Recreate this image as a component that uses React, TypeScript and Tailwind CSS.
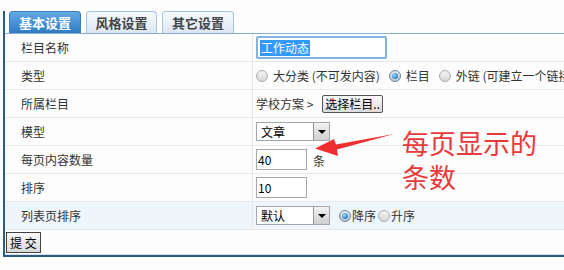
import React from 'react';

const font = { fontFamily: '"Noto Sans CJK SC", "Liberation Sans", sans-serif' };

function Radio({ checked }: { checked?: boolean }) {
  return (
    <span
      className={
        'inline-flex items-center justify-center w-[12px] h-[12px] rounded-full border ' +
        (checked
          ? 'border-[#6b7f92] bg-gradient-to-b from-[#e8eef4] to-[#b9c7d4]'
          : 'border-[#a8adb3] bg-gradient-to-b from-[#f4f4f4] to-[#d6d6d6]')
      }
    >
      {checked && <span className="w-[6px] h-[6px] rounded-full bg-[radial-gradient(circle_at_35%_35%,#9fd4ff,#0b5ea8)]" />}
    </span>
  );
}

function Select({ value }: { value: string }) {
  return (
    <div className="flex w-[74px] h-[19px] border border-[#a3a7ad] bg-white">
      <span className="flex-1 pl-[4px] text-[12px] leading-[17px] text-black">{value}</span>
      <span className="w-[16px] h-full flex items-center justify-center border-l border-[#8f959b] bg-gradient-to-b from-[#f3f3f3] to-[#cfcfcf]">
        <span className="w-0 h-0 border-l-[4px] border-r-[4px] border-t-[4px] border-l-transparent border-r-transparent border-t-black" />
      </span>
    </div>
  );
}

function Row({ label, children, shaded }: { label: string; children: React.ReactNode; shaded?: boolean }) {
  return (
    <div className={'flex h-[28px] border-b border-[#e6e9ec] ' + (shaded ? 'bg-[#eef5fb]' : '')}>
      <div className="w-[248px] shrink-0 pl-[16px] flex items-center border-r border-[#e6e9ec] text-[12px] text-[#333]">{label}</div>
      <div className="flex-1 flex items-center pl-[3px] text-[12px] text-[#333] whitespace-nowrap overflow-hidden">{children}</div>
    </div>
  );
}

export default function App() {
  return (
    <div className="relative w-[564px] h-[270px] bg-[#fdfdfd] overflow-hidden" style={font}>
      <div className="ml-[3px] mt-[11px] w-[600px] border-l-2 border-[#2c5b88]">
        {/* Tabs */}
        <div className="flex items-end gap-[5px] pl-[4px] h-[23px] border-b border-[#86acd0]">
          <div className="w-[72px] h-[22px] rounded-t-[4px] bg-gradient-to-b from-[#63a9e2] to-[#2f7cc2] border border-[#3a7ebd] border-b-0 flex items-center justify-center text-[13px] font-bold text-white">
            基本设置
          </div>
          <div className="w-[71px] h-[22px] rounded-t-[4px] bg-gradient-to-b from-[#f7fafd] to-[#dbe7f3] border border-[#a6c3df] border-b-0 flex items-center justify-center text-[13px] font-bold text-[#444]">
            风格设置
          </div>
          <div className="w-[72px] h-[22px] rounded-t-[4px] bg-gradient-to-b from-[#f7fafd] to-[#dbe7f3] border border-[#a6c3df] border-b-0 flex items-center justify-center text-[13px] font-bold text-[#444]">
            其它设置
          </div>
        </div>

        {/* Form rows */}
        <div>
          <Row label="栏目名称">
            <div className="w-[131px] h-[23px] border-2 border-[#82b3e0] rounded-[2px] bg-white flex items-center pl-[2px]">
              <span className="bg-[#3399ff] text-white text-[12px] leading-[16px] px-[1px]">工作动态</span>
            </div>
          </Row>
          <Row label="类型">
            <div className="flex items-center gap-[5px]">
              <Radio />
              <span>大分类 (不可发内容)</span>
              <span className="ml-[4px] flex"><Radio checked /></span>
              <span>栏目</span>
              <span className="ml-[4px] flex"><Radio /></span>
              <span>外链 (可建立一个链接到其它页面)</span>
            </div>
          </Row>
          <Row label="所属栏目">
            <span>学校方案 &gt;</span>
            <button className="ml-[9px] h-[18px] px-[2px] border border-[#555] rounded-[2px] bg-gradient-to-b from-[#fafafa] to-[#dcdcdc] text-[12px] leading-[14px] text-black">
              选择栏目..
            </button>
          </Row>
          <Row label="模型">
            <Select value="文章" />
          </Row>
          <Row label="每页内容数量">
            <div className="w-[51px] h-[21px] border border-[#a9a9a9] bg-white flex items-center pl-[1px] text-[12px] text-black">40</div>
            <span className="ml-[6px] mt-[3px]">条</span>
          </Row>
          <Row label="排序">
            <div className="w-[51px] h-[21px] border border-[#a9a9a9] bg-white flex items-center pl-[1px] text-[12px] text-black">10</div>
          </Row>
          <Row label="列表页排序" shaded>
            <Select value="默认" />
            <span className="ml-[9px] flex"><Radio checked /></span>
            <span className="ml-[1px]">降序</span>
            <span className="ml-[2px] flex"><Radio /></span>
            <span className="ml-[1px]">升序</span>
          </Row>
        </div>

        <div className="flex items-start pt-[2px] pl-[1px] h-[24px]">
          <button className="h-[21px] px-[3px] border border-[#444] bg-gradient-to-b from-[#fafafa] to-[#d8d8d8] text-[12px] leading-[14px] text-black">
            提 交
          </button>
        </div>
        <div className="h-[3px] border-t border-[#dcdcdc] border-b-2 border-b-[#2c5b88]" />
      </div>

      {/* Annotation */}
      <svg className="absolute left-[310px] top-[128px]" width="90" height="32" viewBox="0 0 90 32">
        <path d="M84 6 L26 16.5 L24 11 L5 20.5 L28 28 L27 21.5 Z" fill="#ef2f2f" />
      </svg>
      <div className="absolute left-[402px] top-[128px] flex flex-col gap-[4px] text-[27px] leading-[30px] text-[#e8393b]">
        <div>每页显示的</div>
        <div>条数</div>
      </div>
    </div>
  );
}
